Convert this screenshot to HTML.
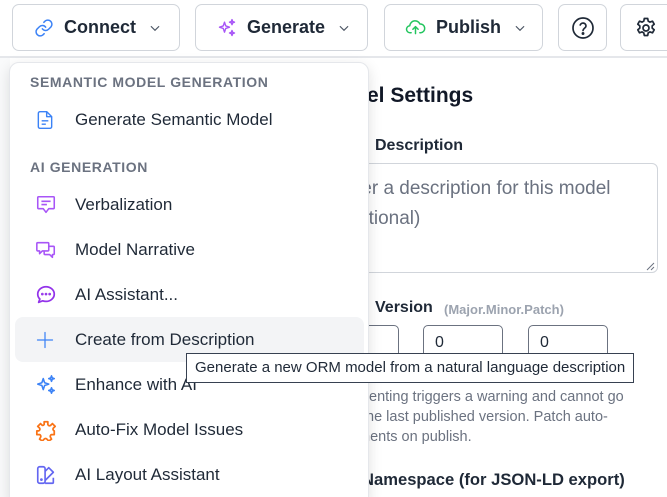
<!DOCTYPE html>
<html><head><meta charset="utf-8"><style>
*{box-sizing:border-box;margin:0;padding:0}
html,body{width:667px;height:497px;overflow:hidden}
body{background:#fff;font-family:"Liberation Sans",sans-serif;position:relative;color:#1f2937}
.a{position:absolute;white-space:nowrap}
.btn{position:absolute;top:4px;height:47px;border:1px solid #d1d5db;border-radius:7px;background:#fff;display:flex;align-items:center;font-size:18px;font-weight:600;color:#1f2937}
.btn svg{flex:none}
.chev{margin-left:12px}
.menu{position:absolute;left:9px;top:62px;width:360px;height:445px;background:#fff;border:1px solid #e5e7eb;border-radius:10px;box-shadow:0 4px 14px rgba(0,0,0,.12);z-index:5}
.hd{position:absolute;left:20px;font-size:14px;letter-spacing:.6px;color:#6b7280;font-weight:600}
.it{position:absolute;left:5px;width:349px;height:45px;display:flex;align-items:center;font-size:17px;color:#1f2937;border-radius:8px}
.it svg{position:absolute;left:20px}
.it span{position:absolute;left:60px}
</style></head><body>
<div class="a" style="left:0;top:56px;width:667px;height:2px;background:#e5e7eb"></div>
<div class="a" style="left:0;top:58px;width:10px;height:439px;background:#f9fafb"></div>

<div class="btn" style="left:12px;width:168px">
<svg style="margin-left:21px" width="20" height="20" viewBox="0 0 24 24" fill="none" stroke="#3b82f6" stroke-width="1.8" stroke-linecap="round"><path d="M10 13a5 5 0 0 0 7.5.5l3-3a5 5 0 0 0-7-7l-1.7 1.7"/><path d="M14 11a5 5 0 0 0-7.5-.5l-3 3a5 5 0 0 0 7 7l1.7-1.7"/></svg>
<span style="margin-left:10px">Connect</span>
<svg class="chev" width="14" height="14" viewBox="0 0 24 24" fill="none" stroke="#4b5563" stroke-width="2"><path d="M5 9l7 7 7-7"/></svg></div>

<div class="btn" style="left:195px;width:173px">
<svg style="margin-left:21px" width="20" height="20" viewBox="0 0 24 24" fill="none" stroke="#a855f7" stroke-width="1.7" stroke-linejoin="round"><path d="M9 5l1.5 4.5L15 11l-4.5 1.5L9 17l-1.5-4.5L3 11l4.5-1.5z"/><path d="M18 2l.8 2.2L21 5l-2.2.8L18 8l-.8-2.2L15 5l2.2-.8z"/><path d="M18 15l.8 2.2L21 18l-2.2.8L18 21l-.8-2.2L15 18l2.2-.8z"/></svg>
<span style="margin-left:10px">Generate</span>
<svg class="chev" width="14" height="14" viewBox="0 0 24 24" fill="none" stroke="#4b5563" stroke-width="2"><path d="M5 9l7 7 7-7"/></svg></div>

<div class="btn" style="left:384px;width:159px">
<svg style="margin-left:20px" width="21" height="21" viewBox="0 0 24 24" fill="none" stroke="#22c55e" stroke-width="1.7" stroke-linecap="round" stroke-linejoin="round"><path d="M7 18H6a4 4 0 0 1-.5-8A6 6 0 0 1 17 8a4.5 4.5 0 0 1 1 10h-1"/><path d="M12 19v-8M9 14l3-3 3 3"/></svg>
<span style="margin-left:10px">Publish</span>
<svg class="chev" width="14" height="14" viewBox="0 0 24 24" fill="none" stroke="#4b5563" stroke-width="2"><path d="M5 9l7 7 7-7"/></svg></div>

<div class="btn" style="left:558px;width:49px;justify-content:center">
<svg width="24" height="24" viewBox="0 0 24 24" fill="none" stroke="#1f2937" stroke-width="1.7" stroke-linecap="round"><circle cx="12" cy="12" r="10"/><path d="M9.2 9a3 3 0 0 1 5.8 1c0 2-3 2.5-3 4.5"/><circle cx="12" cy="17.5" r=".6" fill="#1f2937"/></svg></div>
<div class="btn" style="left:620px;width:60px;padding-left:13px">
<svg width="24" height="24" viewBox="0 0 24 24" fill="none" stroke="#1f2937" stroke-width="1.7" stroke-linejoin="round"><path d="M10.3 2.5h3.4l.5 2.6 1.8 1 2.5-.9 1.7 3-2 1.7v2.2l2 1.7-1.7 3-2.5-.9-1.8 1-.5 2.6h-3.4l-.5-2.6-1.8-1-2.5.9-1.7-3 2-1.7v-2.2l-2-1.7 1.7-3 2.5.9 1.8-1z"/><circle cx="12" cy="12" r="3"/></svg></div>

<!-- right panel -->
<div class="a" style="left:367px;top:84px;font-size:21px;font-weight:700;color:#111827">el Settings</div>
<div class="a" style="left:375px;top:137px;font-size:16px;font-weight:700;color:#1f2937">Description</div>
<div class="a" style="left:300px;top:163px;width:358px;height:110px;border:1px solid #d1d5db;border-radius:6px"></div>
<div class="a" style="left:356px;top:178px;font-size:19px;color:#6b7280">ter a description for this model</div>
<div class="a" style="left:358px;top:208px;font-size:19px;color:#6b7280">ptional)</div>
<svg class="a" style="left:646px;top:262px" width="9" height="9" viewBox="0 0 9 9" stroke="#6b7280" stroke-width="1"><path d="M1 8L8 1M5 8L8 5"/></svg>
<div class="a" style="left:375px;top:299px;font-size:16px;font-weight:700;color:#1f2937">Version</div>
<div class="a" style="left:444px;top:302px;font-size:13px;font-weight:700;color:#9ca3af">(Major.Minor.Patch)</div>
<div class="a" style="left:320px;top:325px;width:79px;height:42px;border:1px solid #6b7280;border-radius:5px"></div>
<div class="a" style="left:423px;top:325px;width:80px;height:42px;border:1px solid #6b7280;border-radius:5px;padding:8px 0 0 11px;font-size:16px">0</div>
<div class="a" style="left:528px;top:325px;width:80px;height:42px;border:1px solid #6b7280;border-radius:5px;padding:8px 0 0 11px;font-size:16px">0</div>
<div class="a" style="left:410px;top:342px;font-size:16px">.</div>
<div class="a" style="left:513px;top:342px;font-size:16px">.</div>
<div class="a" style="left:369px;top:389px;font-size:14.5px;color:#6b7280">enting triggers a warning and cannot go</div>
<div class="a" style="left:362px;top:409px;font-size:14.5px;color:#6b7280">the last published version. Patch auto-</div>
<div class="a" style="left:362px;top:429px;font-size:14.5px;color:#6b7280">nents on publish.</div>
<div class="a" style="left:362px;top:470px;font-size:16.6px;font-weight:700;color:#1f2937">Namespace (for JSON-LD export)</div>

<div class="menu">
<div class="hd" style="top:11px">SEMANTIC MODEL GENERATION</div>
<div class="it" style="top:34px"><svg width="20" height="22" viewBox="0 0 24 24" fill="none" stroke="#3b82f6" stroke-width="1.7" stroke-linejoin="round"><path d="M14 2H6a2 2 0 0 0-2 2v16a2 2 0 0 0 2 2h12a2 2 0 0 0 2-2V8z"/><path d="M14 2v6h6M8 13h8M8 17h5"/></svg><span>Generate Semantic Model</span></div>
<div class="hd" style="top:96px">AI GENERATION</div>
<div class="it" style="top:119px"><svg width="22" height="22" viewBox="0 0 24 24" fill="none" stroke="#a855f7" stroke-width="1.7" stroke-linejoin="round"><path d="M4 3h16a1 1 0 0 1 1 1v11a1 1 0 0 1-1 1h-5l-3 4-3-4H4a1 1 0 0 1-1-1V4a1 1 0 0 1 1-1z"/><path d="M7 8h10M7 11.5h6"/></svg><span>Verbalization</span></div>
<div class="it" style="top:164px"><svg width="22" height="22" viewBox="0 0 24 24" fill="none" stroke="#a855f7" stroke-width="1.7" stroke-linejoin="round"><path d="M3 4h11a1 1 0 0 1 1 1v7a1 1 0 0 1-1 1H8l-3 3v-3H3a1 1 0 0 1-1-1V5a1 1 0 0 1 1-1z"/><path d="M15 8h5a1 1 0 0 1 1 1v7a1 1 0 0 1-1 1h-1v3l-3-3h-5a1 1 0 0 1-1-1v-3"/></svg><span>Model Narrative</span></div>
<div class="it" style="top:209px"><svg width="22" height="22" viewBox="0 0 24 24" fill="none" stroke="#9333ea" stroke-width="1.9" stroke-linejoin="round"><path d="M12 3c5 0 9 3.6 9 8s-4 8-9 8c-1.3 0-2.5-.2-3.6-.6L4 20l1.3-3.6C3.8 15 3 13.1 3 11c0-4.4 4-8 9-8z"/><circle cx="8" cy="11" r=".5" fill="#9333ea"/><circle cx="12" cy="11" r=".5" fill="#9333ea"/><circle cx="16" cy="11" r=".5" fill="#9333ea"/></svg><span>AI Assistant...</span></div>
<div class="it" style="top:254px;background:#f3f4f6"><svg width="20" height="20" viewBox="0 0 24 24" fill="none" stroke="#3b82f6" stroke-width="1.5" stroke-linecap="round"><path d="M12 3v18M3 12h18"/></svg><span>Create from Description</span></div>
<div class="it" style="top:299px"><svg width="22" height="22" viewBox="0 0 24 24" fill="none" stroke="#3b82f6" stroke-width="1.7" stroke-linejoin="round"><path d="M9 5l1.5 4.5L15 11l-4.5 1.5L9 17l-1.5-4.5L3 11l4.5-1.5z"/><path d="M18 2l.8 2.2L21 5l-2.2.8L18 8l-.8-2.2L15 5l2.2-.8z"/><path d="M18 15l.8 2.2L21 18l-2.2.8L18 21l-.8-2.2L15 18l2.2-.8z"/></svg><span>Enhance with AI</span></div>
<div class="it" style="top:344px"><svg width="22" height="22" viewBox="0 0 24 24" fill="none" stroke="#f97316" stroke-width="1.9" stroke-linejoin="round"><path d="M10 3h4v3a2 2 0 0 0 3 1l2-2 3 3-2 2a2 2 0 0 0 1 3h0v4h-3a2 2 0 0 0-1 3l1 2-3 2-2-2a2 2 0 0 0-3 0l-2 2-3-2 1-2a2 2 0 0 0-1-3H2v-4h2a2 2 0 0 0 1-3L3 8l3-3 2 2a2 2 0 0 0 2-1z"/></svg><span>Auto-Fix Model Issues</span></div>
<div class="it" style="top:389px"><svg width="22" height="22" viewBox="0 0 24 24" fill="none" stroke="#6366f1" stroke-width="1.8" stroke-linejoin="round"><rect x="3" y="3" width="8" height="18" rx="2"/><path d="M11 8l4-4 5 5-9 9"/><path d="M11 21h8a1 1 0 0 0 1-1v-5"/><circle cx="7" cy="17" r=".6" fill="#6366f1"/></svg><span>AI Layout Assistant</span></div>
</div>

<div class="a" style="left:186px;top:353px;width:448px;height:30px;border:1.5px solid #374151;background:#fff;z-index:10;font-size:15px;color:#1f2937;padding:5px 0 0 8px">Generate a new ORM model from a natural language description</div>
</body></html>
